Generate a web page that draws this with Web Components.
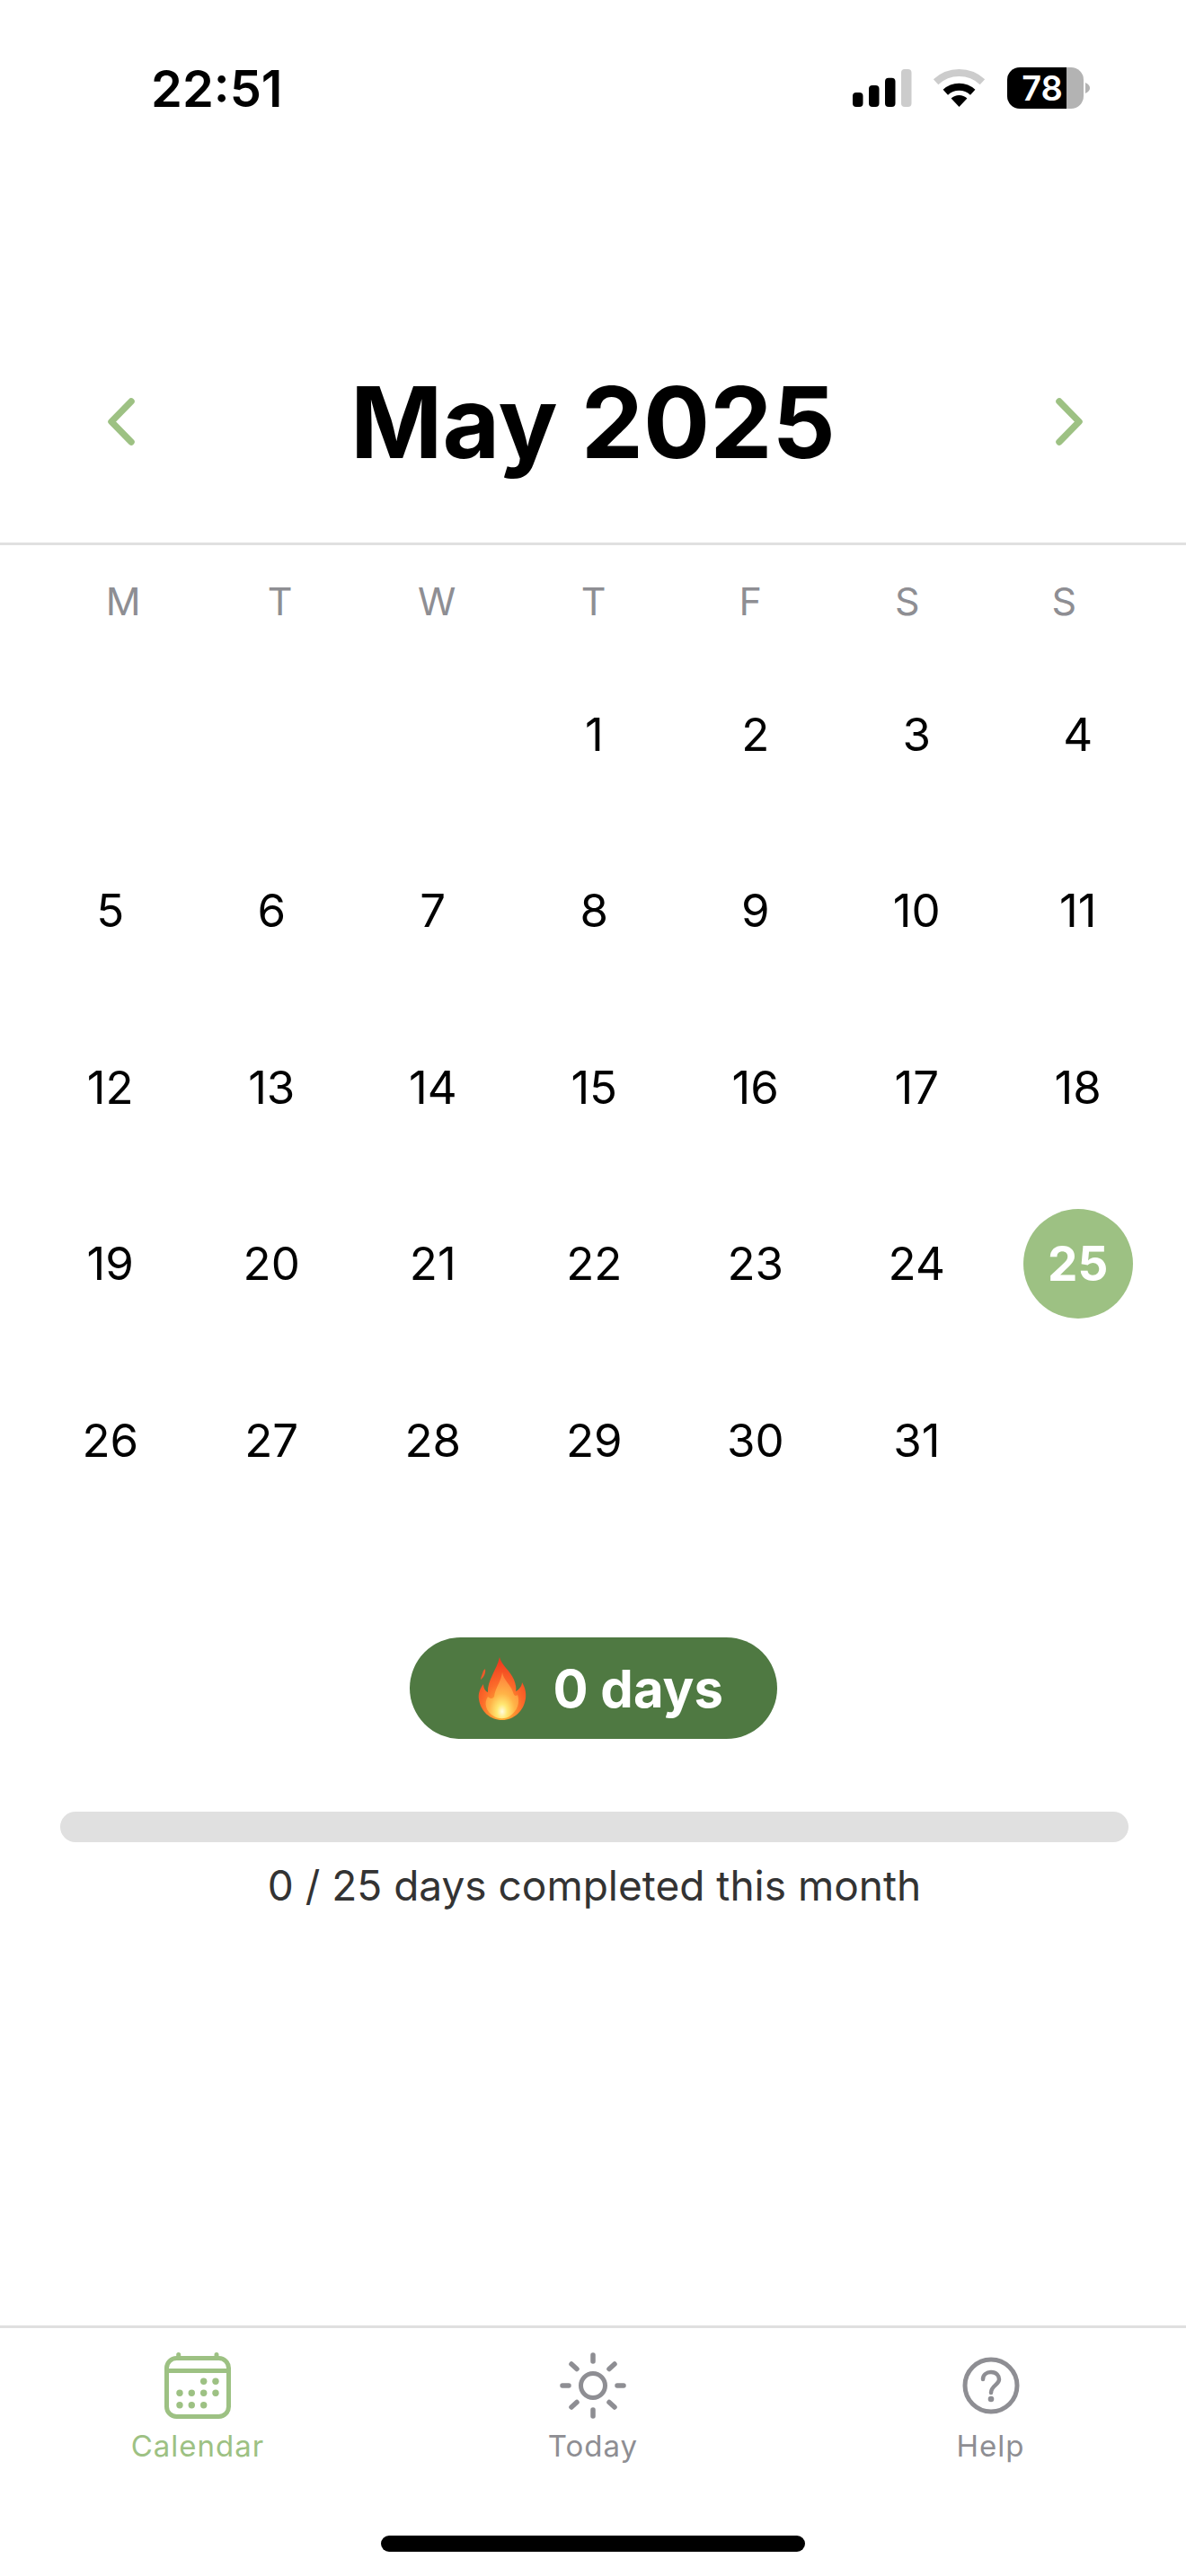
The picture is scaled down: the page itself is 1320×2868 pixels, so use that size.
<!DOCTYPE html>
<html lang="en">
<head>
<meta charset="utf-8">
<title>Calendar</title>
<style>
    html, body { margin: 0; background: #fff; }
    body { font-family: "Inter", "Liberation Sans", sans-serif; }
    app-shell { height: 2868px; }
</style>
</head>
<body>
<app-shell>
    <status-bar></status-bar>
    <month-header>May 2025</month-header>
    <calendar-grid first-offset="3" days="31" selected="25"></calendar-grid>
    <streak-pill>0 days</streak-pill>
    <month-progress>0 / 25 days completed this month</month-progress>
    <tab-bar slot="footer"></tab-bar>
</app-shell>

<script>
class AppShell extends HTMLElement {
    constructor() {
        super();
        this.attachShadow({ mode: 'open' });
        this.shadowRoot.innerHTML = `
            <style>
                :host {
                    display: flex;
                    flex-direction: column;
                    width: 1320px;
                    background: #fff;
                    overflow: hidden;
                }
                .content { flex: 1; display: flex; flex-direction: column; }
            </style>
            <div class="content"><slot></slot></div>
            <slot name="footer"></slot>
        `;
    }
}

class StatusBar extends HTMLElement {
    constructor() {
        super();
        this.attachShadow({ mode: 'open' });
        this.shadowRoot.innerHTML = `
            <style>
                :host {
                    display: flex;
                    justify-content: space-between;
                    align-items: center;
                    box-sizing: border-box;
                    height: 148px;
                    padding: 50px 107px 0 168px;
                }
                .time { font-size: 56px; font-weight: 600; color: #000; line-height: 1; }
                svg { display: block; }
            </style>
            <span class="time">22:51</span>
            <svg width="264" height="48" viewBox="0 0 264 48">
                <rect x="0" y="28" width="11.5" height="16" rx="4" fill="#000"/>
                <rect x="18" y="20" width="11.5" height="24" rx="4" fill="#000"/>
                <rect x="36" y="11.7" width="11.5" height="32.3" rx="4" fill="#000"/>
                <rect x="54" y="2" width="11.5" height="42" rx="4" fill="#ccc"/>
                <path d="M92.6 16.2 A38 38 0 0 1 144.4 16.2" fill="none" stroke="#ccc" stroke-width="8"/>
                <path d="M103.3 27.7 A22.3 22.3 0 0 1 133.7 27.7" fill="none" stroke="#000" stroke-width="8"/>
                <path d="M118.5 44 L109.6 34.5 A13 13 0 0 1 127.4 34.5 Z" fill="#000"/>
                <path d="M186 0 H238 V46 H186 A14 14 0 0 1 172 32 V14 A14 14 0 0 1 186 0 Z" fill="#000"/>
                <path d="M238 0 H243 A14 14 0 0 1 257 14 V32 A14 14 0 0 1 243 46 H238 Z" fill="#b3b3b3"/>
                <path d="M259 17 C263 19 264 21 264 23 C264 25 263 27 259 29 Z" fill="#b3b3b3"/>
                <text x="211" y="37" text-anchor="middle" font-family="Inter, sans-serif" font-size="38" font-weight="600" fill="#fff">78</text>
            </svg>
        `;
    }
}

class MonthHeader extends HTMLElement {
    constructor() {
        super();
        this.attachShadow({ mode: 'open' });
        this.shadowRoot.innerHTML = `
            <style>
                :host {
                    display: grid;
                    grid-template-columns: 1fr auto 1fr;
                    align-items: start;
                    box-sizing: border-box;
                    height: 459px;
                    padding: 267px 115px 0;
                    border-bottom: 3px solid #e0e0e0;
                }
                .title { font-size: 110px; font-weight: 700; color: #000; line-height: 110px; }
                svg { display: block; margin-top: 28px; }
                .prev { margin-left: 5px; }
                .next { justify-self: end; }
            </style>
            <svg class="prev" width="30" height="53" viewBox="0 0 30 53"><path d="M26 4 L4 26.5 L26 49" fill="none" stroke="#9dc183" stroke-width="7.5" stroke-linecap="round" stroke-linejoin="round"/></svg>
            <span class="title"><slot></slot></span>
            <svg class="next" width="30" height="53" viewBox="0 0 30 53"><path d="M4 4 L26 26.5 L4 49" fill="none" stroke="#9dc183" stroke-width="7.5" stroke-linecap="round" stroke-linejoin="round"/></svg>
        `;
    }
}

class CalendarGrid extends HTMLElement {
    constructor() {
        super();
        this.attachShadow({ mode: 'open' });
    }

    connectedCallback() {
        this.render();
    }

    render() {
        const offset = parseInt(this.getAttribute('first-offset') || '0', 10);
        const days = parseInt(this.getAttribute('days') || '30', 10);
        const selected = parseInt(this.getAttribute('selected') || '0', 10);
        const weekdays = ['M', 'T', 'W', 'T', 'F', 'S', 'S'].map(d => `<span>${d}</span>`).join('');
        let cells = '';
        for (let i = 0; i < offset; i++) cells += '<span class="day"></span>';
        for (let d = 1; d <= days; d++) {
            cells += d === selected
                ? `<span class="day"><b>${d}</b></span>`
                : `<span class="day">${d}</span>`;
        }
        this.shadowRoot.innerHTML = `
            <style>
                :host { display: block; }
                .weekdays {
                    display: grid;
                    grid-template-columns: repeat(7, 174.5px);
                    padding-left: 50px;
                    margin-top: 35px;
                    text-align: center;
                    font-size: 43px;
                    color: #8e8e93;
                    line-height: 54px;
                }
                .days {
                    display: grid;
                    grid-template-columns: repeat(7, 179.5px);
                    grid-auto-rows: 196.5px;
                    padding-left: 33px;
                    margin-top: 23px;
                }
                .day {
                    display: flex;
                    align-items: center;
                    justify-content: center;
                    font-size: 51px;
                    color: #000;
                }
                b {
                    display: flex;
                    align-items: center;
                    justify-content: center;
                    width: 122px;
                    height: 122px;
                    border-radius: 50%;
                    background: #9dc183;
                    color: #fff;
                    font-size: 53px;
                    font-weight: 700;
                }
            </style>
            <div class="weekdays">${weekdays}</div>
            <div class="days">${cells}</div>
        `;
    }
}

class StreakPill extends HTMLElement {
    constructor() {
        super();
        this.attachShadow({ mode: 'open' });
        this.shadowRoot.innerHTML = `
            <style>
                :host {
                    display: flex;
                    justify-content: center;
                    margin-top: 121.5px;
                }
                .pill {
                    display: flex;
                    align-items: center;
                    gap: 30px;
                    box-sizing: border-box;
                    width: 409px;
                    height: 113px;
                    padding-left: 76px;
                    border-radius: 57px;
                    background: #4f7942;
                    color: #fff;
                    font-size: 58px;
                    font-weight: 700;
                }
                svg { display: block; }
            </style>
            <div class="pill">
                <svg width="54" height="70" viewBox="0 0 54 70">
                    <defs>
                        <radialGradient id="outer" cx="50%" cy="85%" r="80%">
                            <stop offset="0" stop-color="#ffc83a"/>
                            <stop offset=".55" stop-color="#fb6a2a"/>
                            <stop offset="1" stop-color="#ee3a1e"/>
                        </radialGradient>
                        <radialGradient id="inner" cx="50%" cy="85%" r="72%">
                            <stop offset="0" stop-color="#fffbe0"/>
                            <stop offset=".22" stop-color="#ffe873"/>
                            <stop offset=".55" stop-color="#ffb347"/>
                            <stop offset="1" stop-color="#ff8a3d"/>
                        </radialGradient>
                    </defs>
                    <path d="M24 0 C26 9 36 15 40 25 C42 30 43 35 42 38 C46 36 49 32 49 28 C52 33 54 39 53 46 C51 60 40 70 27 70 C13 70 3 60 1 47 C0 41 2 35 6 30 C6 34 8 38 11 39 C10 26 21 14 24 0 Z" fill="url(#outer)"/>
                    <path d="M6 15 C5 19 3 22 3 25 C6 23 9 18 8 13 Z" fill="#ef5a2a"/>
                    <path d="M27 17 C28 25 36 30 39 39 C40 43 42 44 44 42 C47 50 44 60 35 66 C30 69 23 69 18 66 C9 61 6 51 11 44 C13 46 16 47 18 44 C19 34 26 27 27 17 Z" fill="url(#inner)"/>
                </svg>
                <span><slot></slot></span>
            </div>
        `;
    }
}

class MonthProgress extends HTMLElement {
    constructor() {
        super();
        this.attachShadow({ mode: 'open' });
        this.shadowRoot.innerHTML = `
            <style>
                :host {
                    display: block;
                    margin-top: 81px;
                    padding: 0 64px 0 67px;
                }
                .track { height: 34px; border-radius: 17px; background: #e0e0e0; }
                .label {
                    margin-top: 18px;
                    text-align: center;
                    font-size: 46px;
                    line-height: 60px;
                    color: #333;
                }
            </style>
            <div class="track"></div>
            <div class="label"><slot></slot></div>
        `;
    }
}

class TabBar extends HTMLElement {
    constructor() {
        super();
        this.attachShadow({ mode: 'open' });
        this.shadowRoot.innerHTML = `
            <style>
                :host {
                    display: block;
                    box-sizing: border-box;
                    height: 279px;
                    border-top: 3px solid #e0e0e0;
                }
                .tabs { display: grid; grid-template-columns: repeat(3, 440px); }
                .tab {
                    display: flex;
                    flex-direction: column;
                    align-items: center;
                    box-sizing: border-box;
                    height: 231px;
                    padding-top: 27px;
                    color: #8e8e93;
                    font-size: 33px;
                    letter-spacing: 1px;
                    line-height: 40px;
                }
                .tab.active { color: #9dc183; }
                .tab:last-child { padding-left: 5px; }
                .tab svg { display: block; margin-bottom: 10px; }
                .indicator { width: 472px; height: 18px; margin: 0 auto; border-radius: 9px; background: #000; }
            </style>
            <div class="tabs">
                <div class="tab active">
                    <svg width="74" height="74" viewBox="0 0 74 74" fill="none" stroke="currentColor">
                        <rect x="2.5" y="6.5" width="69" height="65" rx="11" stroke-width="5"/>
                        <path d="M2.5 20.5 H71.5" stroke-width="5"/>
                        <path d="M15.7 2.5 V6 M58 2.5 V6" stroke-width="5" stroke-linecap="round"/>
                        <g fill="currentColor" stroke="none">
                            <circle cx="43.7" cy="32.3" r="3.7"/><circle cx="57" cy="32.3" r="3.7"/>
                            <circle cx="17" cy="45.3" r="3.7"/><circle cx="30.3" cy="45.3" r="3.7"/><circle cx="43.7" cy="45.3" r="3.7"/><circle cx="57" cy="45.3" r="3.7"/>
                            <circle cx="17" cy="58.7" r="3.7"/><circle cx="30.3" cy="58.7" r="3.7"/><circle cx="43.7" cy="58.7" r="3.7"/>
                        </g>
                    </svg>
                    Calendar
                </div>
                <div class="tab">
                    <svg width="74" height="74" viewBox="0 0 74 74" fill="none" stroke="currentColor" stroke-linecap="round">
                        <circle cx="37" cy="37" r="13.5" stroke-width="5"/>
                        <path d="M37 3 V10 M37 64 V71 M3 37 H10 M64 37 H71 M13 13 L19 18.5 M55 55.5 L61 61 M61 13 L55 18.5 M19 55.5 L13 61" stroke-width="5.5"/>
                    </svg>
                    Today
                </div>
                <div class="tab">
                    <svg width="74" height="74" viewBox="0 0 74 74" fill="none" stroke="currentColor">
                        <circle cx="37" cy="37" r="29" stroke-width="5"/>
                        <path d="M28 30 C28 25 32 22 37 22 C43 22 46 26 46 30 C46 36 37 37 37 45" stroke-width="4.5" stroke-linecap="round"/>
                        <circle cx="37" cy="52" r="3.3" fill="currentColor" stroke="none"/>
                    </svg>
                    Help
                </div>
            </div>
            <div class="indicator"></div>
        `;
    }
}

customElements.define('app-shell', AppShell);
customElements.define('status-bar', StatusBar);
customElements.define('month-header', MonthHeader);
customElements.define('calendar-grid', CalendarGrid);
customElements.define('streak-pill', StreakPill);
customElements.define('month-progress', MonthProgress);
customElements.define('tab-bar', TabBar);
</script>
</body>
</html>
